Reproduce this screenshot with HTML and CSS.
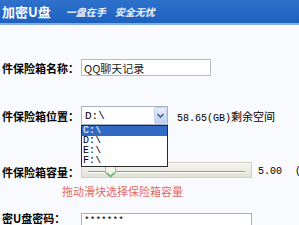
FILE: index.html
```html
<!DOCTYPE html>
<html>
<head>
<meta charset="utf-8">
<link rel="stylesheet" href="styles.css">
</head>
<body>
<div class="header">
  <span class="brand">加密U盘</span>
  <span class="slogan">一盘在手<span class="sp"></span>安全无忧</span>
</div>
<div class="form">
  <div class="row r1">
    <span class="lbl">件保险箱名称：</span>
    <div class="input name">QQ聊天记录</div>
  </div>
  <div class="row r2">
    <span class="lbl">件保险箱位置：</span>
    <div class="select-wrap">
      <div class="select">
        <span class="val">D:\</span>
        <span class="arrow"><svg width="13" height="17" viewBox="0 0 13 17"><defs><linearGradient id="g" x1="0" y1="0" x2="0" y2="1"><stop offset="0" stop-color="#e6eefc"/><stop offset="1" stop-color="#bccff3"/></linearGradient></defs><rect x="0.5" y="0.5" width="12" height="16" rx="1.5" fill="url(#g)" stroke="#c3d3f3"/><path d="M3.5 7 L6.5 10 L9.5 7" fill="none" stroke="#4d6185" stroke-width="1.6"/></svg></span>
      </div>
      <ul class="list">
        <li class="on">C:\</li>
        <li>D:\</li>
        <li>E:\</li>
        <li>F:\</li>
      </ul>
    </div>
    <span class="free"><span class="mono">58.65(GB)</span>剩余空间</span>
  </div>
  <div class="row r3">
    <span class="lbl">件保险箱容量：</span>
    <div class="slider">
      <div class="track"></div>
      <svg class="thumb" width="11" height="14" viewBox="0 0 11 14"><path d="M0.5 0.5 H10.5 V9 L5.5 13.5 L0.5 9 Z" fill="#f3f3ee" stroke="#a9b4b8"/><path d="M1.5 8.5 L5.5 12.3 L9.5 8.5" fill="none" stroke="#5fb85f" stroke-width="1.2"/></svg>
    </div>
    <span class="mono cap">5.00</span>
    <span class="mono unit">(GB)</span>
  </div>
  <div class="hint">拖动滑块选择保险箱容量</div>
  <div class="row r5">
    <span class="lbl">密U盘密码：</span>
    <div class="input pwd"><span class="mono">*******</span></div>
  </div>
</div>
</body>
</html>
```

FILE: styles.css
```css
html, body {
  margin: 0;
  padding: 0;
}
body {
  width: 299px;
  height: 225px;
  overflow: hidden;
  background: #f9fafd;
  font-family: "Noto Sans CJK SC", "DejaVu Sans", sans-serif;
  font-size: 11px;
  color: #000;
}
.header {
  height: 23px;
  background: linear-gradient(#2f72cc, #1d61c0);
  border-bottom: 2px solid #86afe4;
  display: flex;
  align-items: center;
  padding-left: 2px;
  color: #fff;
}
.brand {
  font-size: 13px;
  font-weight: bold;
  line-height: 13px;
}
.slogan {
  margin-left: 15px;
  font-size: 10px;
  font-weight: bold;
  font-style: italic;
  line-height: 10px;
  color: #eef2fa;
  display: flex;
}
.slogan .sp {
  width: 9px;
}
.form {
  display: flex;
  flex-direction: column;
}
.row {
  display: flex;
  align-items: center;
}
.lbl {
  width: 79px;
  padding-left: 2px;
  font-weight: bold;
  white-space: nowrap;
  flex: none;
}
.mono {
  font-family: "Liberation Mono", "DejaVu Sans Mono", monospace;
}
.r1 {
  margin-top: 34px;
  height: 17px;
}
.input {
  box-sizing: border-box;
  height: 17px;
  border: 1px solid #bcbcbc;
  background: #fff;
  display: flex;
  align-items: center;
  padding-left: 2px;
}
.name {
  width: 130px;
  color: #222;
  font-size: 11px;
  line-height: 14px;
}
.r2 {
  margin-top: 30px;
  height: 19px;
}
.select-wrap {
  position: relative;
  width: 87px;
  flex: none;
}
.select {
  box-sizing: border-box;
  height: 19px;
  border: 1px solid #a8b2c0;
  background: #fff;
  display: flex;
  align-items: center;
  justify-content: space-between;
}
.select .val {
  font-family: "Liberation Mono", monospace;
  font-size: 11px;
  padding-left: 3px;
  line-height: 14px;
}
.arrow {
  display: flex;
}
.arrow svg {
  display: block;
}
.list {
  position: absolute;
  z-index: 5;
  left: 0;
  top: 19px;
  margin: 0;
  padding: 0;
  list-style: none;
  box-sizing: border-box;
  width: 87px;
  border: 1px solid #2a2a2a;
  background: #fff;
}
.list li {
  height: 10px;
  line-height: 10px;
  font-family: "Liberation Mono", monospace;
  font-size: 10px;
  padding-left: 1px;
  overflow: hidden;
}
.list li.on {
  background: #316ac5;
  color: #fff;
}
.free {
  margin-left: 9px;
  font-size: 11px;
  white-space: nowrap;
}
.free .mono {
  font-size: 10px;
}
.r3 {
  margin-top: 37px;
  height: 16px;
}
.r3 .lbl {
  padding-top: 3px;
}
.slider {
  position: relative;
  box-sizing: border-box;
  width: 171px;
  height: 16px;
  border: 1px solid #d2d2c4;
  background: linear-gradient(#f6f6f0, #e2e2d4);
  flex: none;
}
.track {
  margin: 8px 6px 0 6px;
  height: 1px;
  background: #9a9a8e;
  border-bottom: 1px solid #fff;
}
.thumb {
  position: absolute;
  left: 23px;
  top: 1px;
}
.cap {
  margin-left: 6px;
  padding-top: 3px;
  font-size: 10px;
}
.unit {
  margin-left: 13px;
  padding-top: 3px;
  font-size: 10px;
  white-space: nowrap;
}
.hint {
  margin-top: 6px;
  margin-left: 62px;
  height: 14px;
  line-height: 14px;
  font-size: 11px;
  color: #e06a6a;
  white-space: nowrap;
}
.r5 {
  margin-top: 15px;
  height: 11px;
  align-items: flex-start;
}
.r5 .lbl {
  line-height: 10px;
}
.pwd {
  width: 171px;
  height: 18px;
  font-size: 9.5px;
  line-height: 9px;
  align-items: flex-start;
  padding-top: 2px;
  border-color: #b0b0b0;
}
```
